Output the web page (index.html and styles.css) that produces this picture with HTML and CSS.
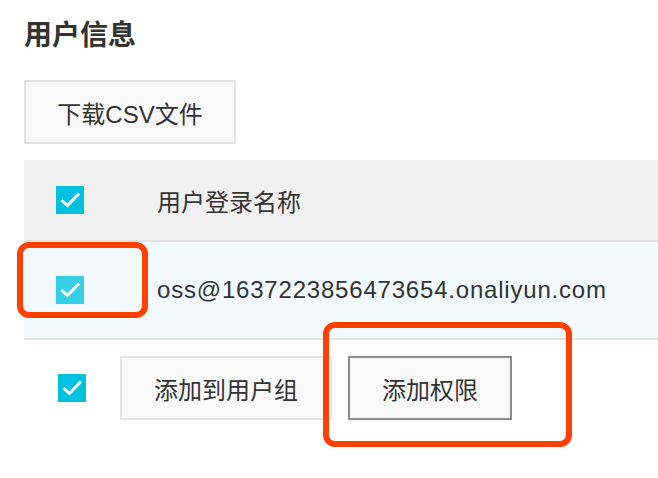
FILE: index.html
```html
<!DOCTYPE html>
<html lang="zh">
<head>
<meta charset="utf-8">
<link rel="stylesheet" href="styles.css">
</head>
<body>
<div class="page">
  <h2 class="title">用户信息</h2>
  <button class="btn btn-csv">下载CSV文件</button>
  <div class="table">
    <div class="row row-head">
      <div class="col-check"><span class="cb"><svg viewBox="0 0 28 28" width="28" height="28"><path d="M6.5 15 L11.5 19.5 L22 8.5" fill="none" stroke="#fff" stroke-width="3" stroke-linecap="square"/></svg></span></div>
      <div class="col-name">用户登录名称</div>
    </div>
    <div class="row row-body">
      <div class="col-check"><span class="cb cb-light"><svg viewBox="0 0 28 28" width="28" height="28"><path d="M6.5 15 L11.5 19.5 L22 8.5" fill="none" stroke="#fff" stroke-width="3" stroke-linecap="square"/></svg></span></div>
      <div class="col-name email">oss@1637223856473654.onaliyun.com</div>
    </div>
    <div class="row row-foot">
      <div class="col-check foot-check"><span class="cb"><svg viewBox="0 0 28 28" width="28" height="28"><path d="M6.5 15 L11.5 19.5 L22 8.5" fill="none" stroke="#fff" stroke-width="3" stroke-linecap="square"/></svg></span></div>
      <div class="actions">
        <button class="btn btn-action">添加到用户组</button>
        <button class="btn btn-action btn-dark">添加权限</button>
      </div>
    </div>
  </div>
  <div class="mark mark-1"></div>
  <div class="mark mark-2"></div>
</div>
</body>
</html>
```
FILE: styles.css
```css
* { box-sizing: border-box; }
html, body {
  margin: 0;
  padding: 0;
  background: #fff;
}
body {
  width: 658px;
  height: 478px;
  overflow: hidden;
  font-family: "Liberation Sans", "Noto Sans CJK SC", sans-serif;
  color: #333;
}
.page {
  position: relative;
  padding: 22px 0 0 24px;
}
.title {
  margin: 0;
  font-size: 28px;
  line-height: 28px;
  font-weight: bold;
  color: #333;
}
.btn {
  font-family: inherit;
  font-size: 24px;
  color: #333;
  background: #f9f9f9;
  border: 2px solid #e3e3e3;
  border-radius: 0;
  height: 64px;
  padding: 0 32px;
  margin: 0;
  cursor: pointer;
}
.btn-csv {
  display: block;
  margin-top: 30px;
  width: 212px;
  padding: 0;
}
.table {
  margin-top: 16px;
}
.row {
  display: flex;
  align-items: center;
}
.row-head {
  height: 82px;
  background: #f1f1f1;
  border-bottom: 2px solid #e3e3e3;
}
.row-body {
  height: 98px;
  background: #f2fafd;
  border-bottom: 2px solid #e3e3e3;
}
.row-foot {
  padding-top: 16px;
}
.col-check {
  width: 133px;
  padding-left: 32px;
  display: flex;
}
.foot-check {
  width: 96px;
  padding-left: 34px;
}
.col-name {
  font-size: 24px;
}
.email {
  letter-spacing: 0.8px;
}
.cb {
  display: block;
  width: 28px;
  height: 28px;
  background: #00c1de;
}
.cb svg { display: block; }
.cb-light {
  background: #35d0e6;
}
.actions {
  display: flex;
  gap: 16px;
}
.btn-action {
  height: 64px;
}
.btn-action:first-child {
  width: 212px;
  padding: 0;
}
.btn-dark {
  width: 164px;
  padding: 0;
  border-color: #8c8c8c;
}
.mark {
  position: absolute;
  border: 6px solid #ff4000;
  border-radius: 12px;
}
.mark-1 {
  left: 17px;
  top: 242px;
  width: 131px;
  height: 76px;
}
.mark-2 {
  left: 323px;
  top: 322px;
  width: 249px;
  height: 125px;
}
```
